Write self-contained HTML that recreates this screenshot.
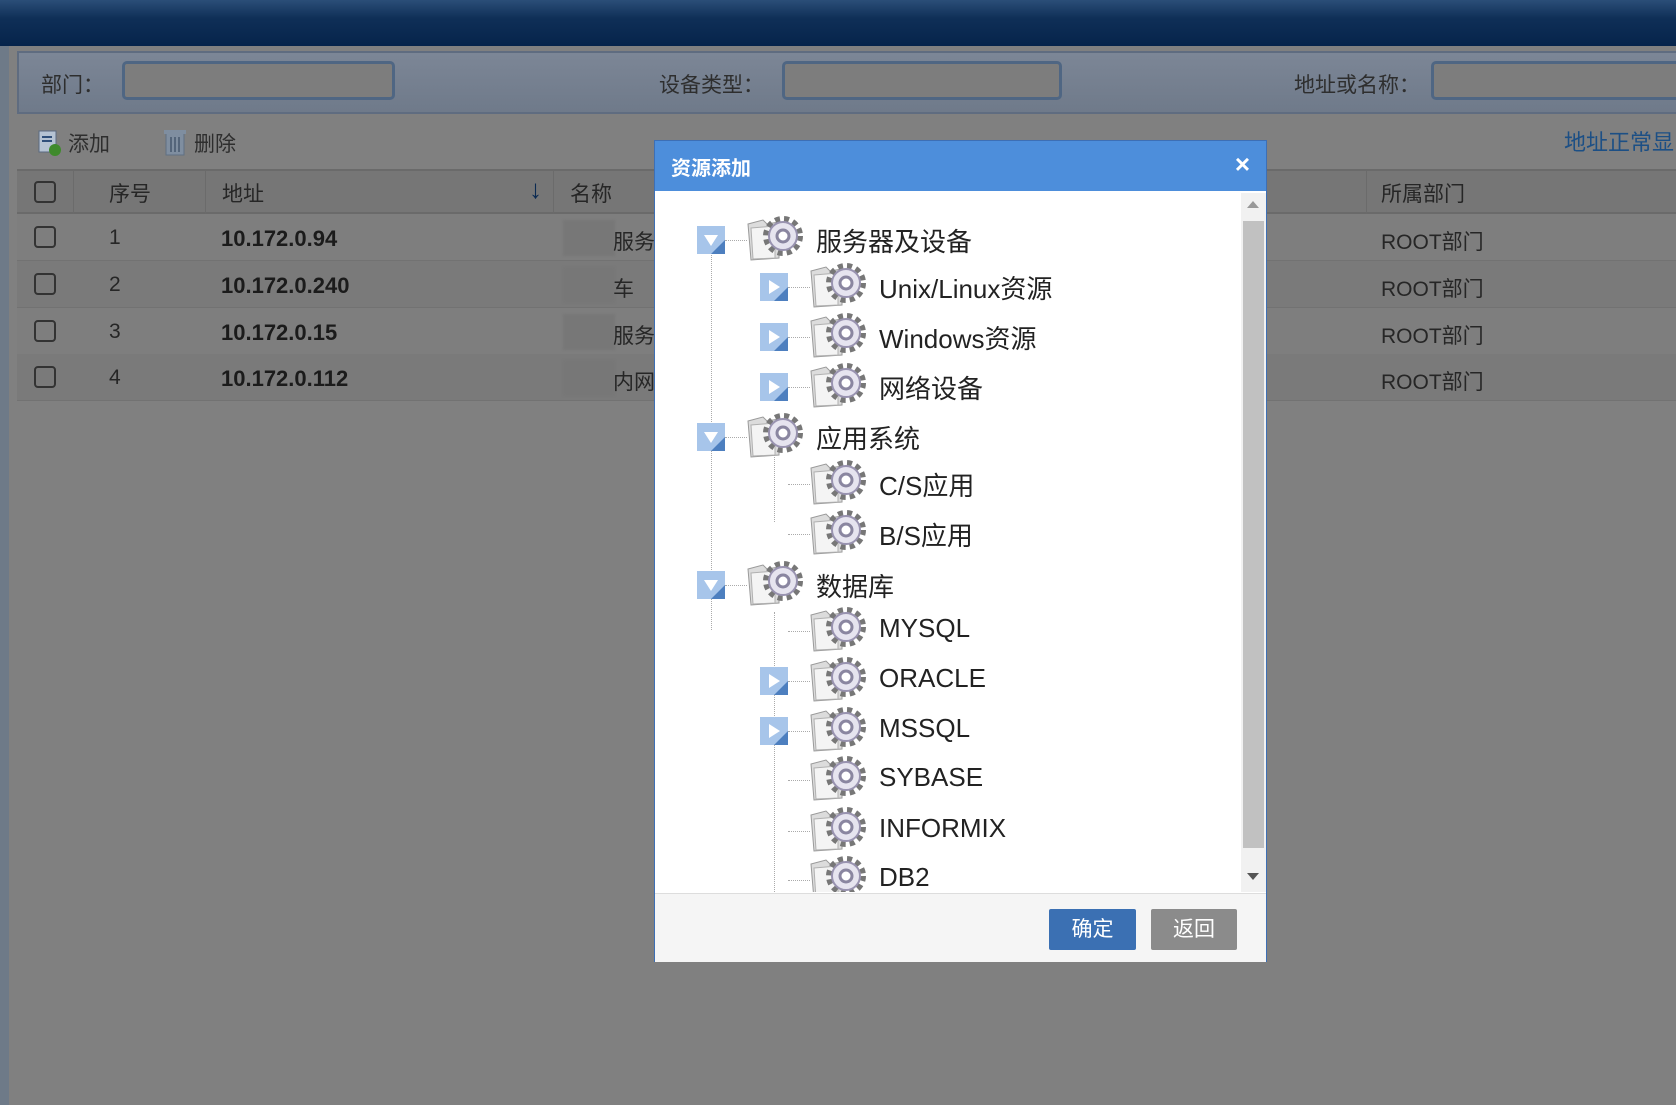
<!DOCTYPE html>
<html><head><meta charset="utf-8"><style>
*{margin:0;padding:0;box-sizing:border-box}
body{width:1676px;height:1105px;overflow:hidden;background:#808080;font-family:"Liberation Sans","Noto Sans CJK SC",sans-serif;position:relative;color:#2a2a2a}
.a{position:absolute}
.top{left:0;top:0;width:1676px;height:46px;background:linear-gradient(#2b4e78,#0f2f57 40%,#06244b)}
.lb{left:0;top:46px;width:9px;height:1059px;background:#6e7a88}
.search{left:17px;top:51px;width:1659px;height:63px;background:linear-gradient(#7c8696,#6f7a8a);border:2px solid #5f6c80;border-right:none}
.lbl{font-size:21px;color:#2e2e2e}
.inp{height:39px;border:3px solid #4f6683;border-radius:5px;background:#7d7d7d}
.tb{left:17px;top:114px;width:1659px;height:55px;background:#808080}
.th{left:17px;top:169px;width:1659px;height:45px;background:#767676;border-top:2px solid #6a6a6a;border-bottom:2px solid #6a6a6a}
.row{left:17px;width:1659px;height:47px;border-bottom:1px solid #727272}
.cb{width:22px;height:22px;border:2px solid #333;border-radius:4px}
.sep{width:1px;height:43px;background:#6b6b6b;top:0}
.cell{font-size:21px;color:#262626;top:12px}
.th .cell{top:7px}
.ip{font-weight:bold;font-size:22px;color:#1b1b1b}
.blur{background:#777;width:52px;height:36px;top:6px;filter:blur(1px)}
.dlg{left:654px;top:140px;width:613px;height:822px;background:#fff;border:1px solid #3d6fb5}
.hd{left:0;top:0;width:611px;height:50px;background:#4d8edb;color:#fff;font-weight:bold;font-size:20px;padding:11px 16px}
.ft{left:0;top:752px;width:611px;height:69px;background:#f5f5f5;border-top:1px solid #ddd}
.btn{top:15px;height:41px;width:87px;color:#fff;font-size:21px;text-align:center;line-height:41px;border-radius:2px}
.sb{left:586px;top:52px;width:25px;height:699px;background:#f1f1f1}
.tg{width:28px;height:28px;background:#a7c5ea}
.tx{font-size:26px;color:#222;white-space:nowrap}
.dot{border-top:1px dotted #aaa;height:0}
.vd{border-left:1px dotted #aaa;width:0}
</style></head><body>
<div class="a top"></div><div class="a lb"></div>
<div class="a search">
 <div class="a lbl" style="left:22px;top:16px">部门：</div>
 <div class="a inp" style="left:103px;top:8px;width:273px"></div>
 <div class="a lbl" style="left:640px;top:16px">设备类型：</div>
 <div class="a inp" style="left:763px;top:8px;width:280px"></div>
 <div class="a lbl" style="left:1275px;top:16px">地址或名称：</div>
 <div class="a inp" style="left:1412px;top:8px;width:260px"></div>
</div>
<div class="a tb">
 <svg class="a" style="left:20px;top:16px" width="26" height="27"><rect x="2" y="1" width="17" height="21" fill="#b5c3d3" stroke="#5a6a80"/><line x1="5" y1="7" x2="15" y2="7" stroke="#2f4f7a" stroke-width="2"/><line x1="5" y1="11" x2="15" y2="11" stroke="#2f4f7a" stroke-width="2"/><circle cx="18" cy="20" r="6" fill="#3f8a2c"/></svg>
 <div class="a lbl" style="left:51px;top:14px">添加</div>
 <svg class="a" style="left:147px;top:15px" width="22" height="28"><rect x="2" y="4" width="18" height="22" fill="#7f8ea0" stroke="#5f6f82"/><rect x="0" y="1" width="22" height="4" fill="#7f8ea0"/><line x1="7" y1="8" x2="7" y2="23" stroke="#54657a" stroke-width="2"/><line x1="11" y1="8" x2="11" y2="23" stroke="#54657a" stroke-width="2"/><line x1="15" y1="8" x2="15" y2="23" stroke="#54657a" stroke-width="2"/></svg>
 <div class="a lbl" style="left:177px;top:14px">删除</div>
 <div class="a" style="left:1547px;top:11px;font-size:22px;color:#1c4f85">地址正常显</div>
</div>
<div class="a th">
 <div class="a cb" style="left:17px;top:10px"></div>
 <div class="a sep" style="left:56px"></div><div class="a cell" style="left:92px">序号</div>
 <div class="a sep" style="left:188px"></div><div class="a cell" style="left:205px">地址</div>
 <div class="a cell" style="left:512px;top:3px;font-size:26px;color:#0b2a52;font-weight:bold">↓</div>
 <div class="a sep" style="left:536px"></div><div class="a cell" style="left:553px">名称</div>
 <div class="a sep" style="left:1349px"></div><div class="a cell" style="left:1364px">所属部门</div>
</div>
<div class="a row" style="top:214px;background:#7e7e7e"><div class="a cb" style="left:17px;top:12px"></div><div class="a cell" style="left:92px">1</div><div class="a cell ip" style="left:204px">10.172.0.94</div><div class="a blur" style="left:546px"></div><div class="a cell" style="left:596px">服务</div><div class="a cell" style="left:1364px">ROOT部门</div></div>
<div class="a row" style="top:261px;background:#7a7a7a"><div class="a cb" style="left:17px;top:12px"></div><div class="a cell" style="left:92px">2</div><div class="a cell ip" style="left:204px">10.172.0.240</div><div class="a blur" style="left:546px"></div><div class="a cell" style="left:596px">车</div><div class="a cell" style="left:1364px">ROOT部门</div></div>
<div class="a row" style="top:308px;background:#7e7e7e"><div class="a cb" style="left:17px;top:12px"></div><div class="a cell" style="left:92px">3</div><div class="a cell ip" style="left:204px">10.172.0.15</div><div class="a blur" style="left:546px"></div><div class="a cell" style="left:596px">服务</div><div class="a cell" style="left:1364px">ROOT部门</div></div>
<div class="a row" style="top:354px;background:#7a7a7a"><div class="a cb" style="left:17px;top:12px"></div><div class="a cell" style="left:92px">4</div><div class="a cell ip" style="left:204px">10.172.0.112</div><div class="a blur" style="left:546px"></div><div class="a cell" style="left:596px">内网</div><div class="a cell" style="left:1364px">ROOT部门</div></div>

<div class="a dlg">
 <div class="a hd">资源添加<span class="a" style="right:16px;top:8px;font-size:26px">×</span></div>
 <div class="a sb"><div class="a" style="left:6px;top:8px;width:0;height:0;border:6px solid transparent;border-bottom:7px solid #999;border-top:none"></div><div class="a" style="left:2px;top:28px;width:21px;height:627px;background:#c1c1c1"></div><div class="a" style="left:6px;top:680px;width:0;height:0;border:6px solid transparent;border-top:7px solid #555;border-bottom:none"></div></div>
 <div class="a" style="left:0;top:51px;width:585px;height:700px;overflow:hidden">
  <div class="a vd" style="left:56px;top:48px;height:390px"></div>
  <div class="a vd" style="left:119px;top:230px;height:100px"></div>
  <div class="a vd" style="left:119px;top:420px;height:300px"></div>
  <div id="tree"></div>
 </div>
 <div class="a ft">
  <div class="a btn" style="left:394px;background:#3b70b3">确定</div>
  <div class="a btn" style="left:496px;background:#8b8b8b;width:86px">返回</div>
 </div>
</div>
<script>
var items=[[0,1,'服务器及设备',48],[1,2,'Unix/Linux资源',95],[1,2,'Windows资源',145],[1,2,'网络设备',195],[0,1,'应用系统',245],[1,0,'C/S应用',292],[1,0,'B/S应用',342],[0,1,'数据库',393],[1,0,'MYSQL',439],[1,2,'ORACLE',489],[1,2,'MSSQL',539],[1,0,'SYBASE',588],[1,0,'INFORMIX',639],[1,0,'DB2',688]];
var icon='<svg width="62" height="48" viewBox="0 0 62 48"><path d="M3 10 L18 6 L22 10 L34 8 L34 44 L6 46 Z" fill="#dcdcdc" stroke="#9a9a9a"/><path d="M6 14 L30 12 L30 44 L8 45 Z" fill="#f4f4f4" stroke="#b0b0b0"/><g transform="translate(38,22)"><circle r="17" fill="none" stroke="#777" stroke-width="6" stroke-dasharray="5 4"/><circle r="14" fill="#e6e4ef" stroke="#9993b0" stroke-width="2"/><circle r="6" fill="#fff" stroke="#8a86a0" stroke-width="3"/></g></svg>';
var h='';
items.forEach(function(it){var l=it[0],t=it[1],y=it[3];var x=l?105:42;
 if(t){h+='<div class="a tg" style="left:'+x+'px;top:'+(y-14)+'px">'+(t==1?'<div class="a" style="left:7px;top:9px;border:7px solid transparent;border-top:11px solid #fff;border-bottom:none"></div>':'<div class="a" style="left:9px;top:7px;border:7px solid transparent;border-left:11px solid #fff;border-right:none"></div>')+'<div class="a" style="right:0;bottom:0;width:0;height:0;border-left:14px solid transparent;border-bottom:14px solid #4d7fbf"></div></div>';}
 h+='<div class="a dot" style="left:'+(x+28)+'px;top:'+y+'px;width:22px"></div>';
 h+='<div class="a" style="left:'+(x+48)+'px;top:'+(y-26)+'px">'+icon+'</div>';
 h+='<div class="a tx" style="left:'+(x+119)+'px;top:'+(y-18)+'px">'+it[2]+'</div>';});
document.getElementById('tree').innerHTML=h;
</script>
</body></html>
